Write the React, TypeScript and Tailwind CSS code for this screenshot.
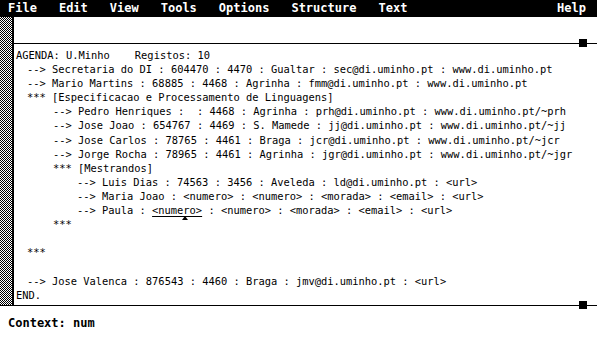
import React from "react";

const mono = { fontFamily: '"DejaVu Sans Mono", "Liberation Mono", monospace' };

const MenuBar = () => {
    const items = ["File", "Edit", "View", "Tools", "Options", "Structure", "Text"];
    return (
        <div className="h-[17px] bg-black text-white font-bold text-[12px] leading-[17px] flex pl-[8px] pr-[11px]" style={mono}>
            <div className="flex gap-[22px]">
                {items.map((item) => (
                    <span key={item}>{item}</span>
                ))}
            </div>
            <span className="ml-auto">Help</span>
        </div>
    );
};

const indent = ["pl-0", "pl-[11px]", "pl-[37px]", "pl-[61px]"];

const lines: [number, string][] = [
    [0, "AGENDA: U.Minho    Registos: 10"],
    [1, "--> Secretaria do DI : 604470 : 4470 : Gualtar : sec@di.uminho.pt : www.di.uminho.pt"],
    [1, "--> Mario Martins : 68885 : 4468 : Agrinha : fmm@di.uminho.pt : www.di.uminho.pt"],
    [1, "*** [Especificacao e Processamento de Linguagens]"],
    [2, "--> Pedro Henriques :  : 4468 : Agrinha : prh@di.uminho.pt : www.di.uminho.pt/~prh"],
    [2, "--> Jose Joao : 654767 : 4469 : S. Mamede : jj@di.uminho.pt : www.di.uminho.pt/~jj"],
    [2, "--> Jose Carlos : 78765 : 4461 : Braga : jcr@di.uminho.pt : www.di.uminho.pt/~jcr"],
    [2, "--> Jorge Rocha : 78965 : 4461 : Agrinha : jgr@di.uminho.pt : www.di.uminho.pt/~jgr"],
    [2, "*** [Mestrandos]"],
    [3, "--> Luis Dias : 74563 : 3456 : Aveleda : ld@di.uminho.pt : <url>"],
    [3, "--> Maria Joao : <numero> : <numero> : <morada> : <email> : <url>"],
    [3, "PAULA"],
    [2, "***"],
    [0, ""],
    [1, "***"],
    [0, ""],
    [1, "--> Jose Valenca : 876543 : 4460 : Braga : jmv@di.uminho.pt : <url>"],
    [0, "END."],
];

const Square = () => <div className="absolute right-[10px] top-[-4px] w-[8px] h-[8px] bg-black" />;

const App = () => {
    return (
        <div className="w-[597px] h-[343px] bg-white text-black overflow-hidden">
            <MenuBar />

            <div className="flex h-[288px]">
                {/* stippled margin */}
                <div className="w-[12px] bg-[repeating-conic-gradient(#000_0%_25%,#fff_0%_50%)] bg-[length:2px_2px]" />
                <div className="w-[2px] bg-black" />

                <div className="flex-1 flex flex-col">
                    <div className="h-[26px]" />
                    <div className="relative h-px bg-black">
                        <Square />
                    </div>

                    {/* document */}
                    <div className="pt-[4px] pl-[2px] text-[10.4px] leading-[14.1px] whitespace-pre" style={mono}>
                        {lines.map(([lvl, text], i) => (
                            <div key={i} className={`h-[14.1px] ${indent[lvl]}`}>
                                {text === "PAULA" ? (
                                    <>
                                        {"--> Paula : "}
                                        <span className="relative underline underline-offset-2">
                                            {"<numero>"}
                                            <svg className="absolute left-[30px] top-[12px]" width="6" height="4" viewBox="0 0 6 4">
                                                <path d="M0 4 L3 0 L6 4 Z" fill="#000" />
                                            </svg>
                                        </span>
                                        {" : <numero> : <morada> : <email> : <url>"}
                                    </>
                                ) : (
                                    text
                                )}
                            </div>
                        ))}
                    </div>
                </div>
            </div>

            <div className="relative h-px bg-black">
                <Square />
            </div>

            {/* status line */}
            <div className="pt-[9px] pl-[8px] text-[12px] leading-[16px] font-bold" style={mono}>
                Context: num
            </div>
        </div>
    );
};

export default App;
